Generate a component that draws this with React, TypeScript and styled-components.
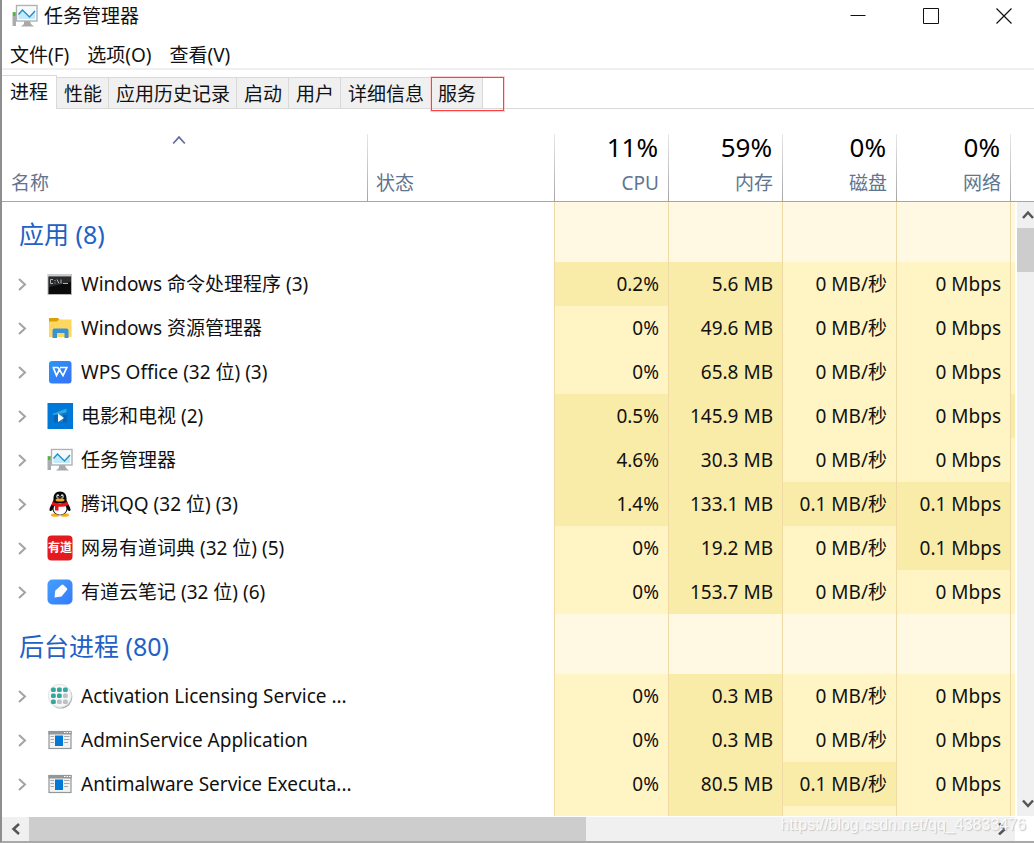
import React from "react";
import styled, { createGlobalStyle } from "styled-components";

const GlobalStyle = createGlobalStyle`
  *, *::before, *::after { box-sizing: border-box; }
  body { margin: 0; background: #fff; }
  button { font: inherit; color: inherit; }
`;

const Window = styled.main`
  position: relative;
  display: flex;
  flex-direction: column;
  height: 100vh;
  overflow: hidden;
  border-left: 2px solid #8e8e8e;
  border-bottom: 2px solid #a9a9a9;
  background: #fff;
  color: #111;
  font: 19px/24px "Noto Sans", "Noto Sans CJK SC", sans-serif;
`;

const TitleBar = styled.header`
  display: flex;
  align-items: center;
  gap: 6px;
  height: 32px;
  flex: none;
  padding-left: 10px;
`;

const Title = styled.h1`
  margin: 0;
  flex: 1;
  font-size: 19px;
  font-weight: 400;
`;

const Captions = styled.div`
  display: flex;
  align-self: stretch;
`;

const CaptionButton = styled.button`
  display: flex;
  align-items: center;
  justify-content: center;
  width: 73px;
  padding: 0;
  border: 0;
  background: none;

  &:last-child {
    width: 60px;
    margin-left: 7px;
  }
`;

const MenuBar = styled.nav`
  display: flex;
  align-items: center;
  gap: 18px;
  height: 38px;
  flex: none;
  padding: 12px 8px 2px;
  border-bottom: 2px solid #f0f0f0;
`;

const MenuButton = styled.button`
  padding: 0;
  border: 0;
  background: none;
  line-height: 22px;
`;

const TabStrip = styled.div`
  display: flex;
  align-items: flex-end;
  height: 39px;
  flex: none;
  padding-top: 5px;
  background: linear-gradient(#d9d9d9, #d9d9d9) bottom / 100% 1px no-repeat;
`;

const TabSlot = styled.div`
  position: relative;
  display: flex;
`;

const Tab = styled.button<{ $active?: boolean }>`
  height: ${(p) => (p.$active ? 34 : 32)}px;
  padding: ${(p) => (p.$active ? "0 8px 2px" : "2px 6px 0 7px")};
  border: solid #d9d9d9;
  border-width: ${(p) => (p.$active ? "1px 1px 0 0" : "1px 1px 1px 0")};
  background: ${(p) => (p.$active ? "#fff" : "#f0f0f0")};
  line-height: 24px;
  white-space: nowrap;
`;

const TabOutline = styled.div`
  position: absolute;
  top: 0;
  left: 0;
  width: 73px;
  height: 34px;
  border: 1px solid #ff4040;
  box-shadow: 0 0 0 1px #ffd0d0;
  pointer-events: none;
`;

const Panel = styled.section`
  display: flex;
  flex: 1;
  min-height: 0;
  padding-top: 21px;
`;

const ListView = styled.div`
  flex: 1;
  min-width: 0;
  overflow: hidden;
`;

const ProcessTable = styled.table`
  width: 100%;
  table-layout: fixed;
  border-spacing: 0;
`;

const Col = styled.col<{ $w?: number }>`
  width: ${(p) => (p.$w ? `${p.$w}px` : "auto")};
`;

const HeadCell = styled.th<{ $align?: string; $line?: boolean }>`
  height: 72px;
  padding: 0 9px;
  border-bottom: 1px solid #a6a6a6;
  background: ${(p) =>
    p.$line ? "linear-gradient(#e8e8e8, #a6a6a6) left bottom / 1px 67px no-repeat" : "none"};
  color: #5f7590;
  font-weight: 400;
  text-align: ${(p) => p.$align || "left"};
  vertical-align: top;

  &:last-child { padding: 0; }
`;

const Total = styled.div`
  height: 36px;
  padding-right: 1px;
  color: #000;
  font-size: 26px;
  line-height: 34px;
`;

const HeadLabel = styled.div`
  margin-top: 5px;
  line-height: 24px;
`;

const SortMark = styled.div`
  display: flex;
  justify-content: center;
  height: 36px;
  padding: 3px 12px 0 0;
`;

const GroupCell = styled.th`
  height: 60px;
  padding: 4px 17px 0;
  color: #2460c4;
  font-size: 25px;
  line-height: 36px;
  font-weight: 400;
  text-align: left;
`;

const NameCell = styled.th`
  height: 44px;
  padding: 0 0 0 14px;
  font-weight: 400;
  text-align: left;
`;

const NameContent = styled.div`
  display: flex;
  align-items: center;
  white-space: nowrap;
`;

const Expander = styled.button`
  display: flex;
  width: 12px;
  margin-right: 19px;
  padding: 0;
  border: 0;
  background: none;
`;

const IconBox = styled.span`
  display: flex;
  width: 26px;
  margin-right: 8px;
`;

const heat = { none: "#fff8e2", low: "#fff4c4", mid: "#f9eca8" };
type Heat = keyof typeof heat;

const DataCell = styled.td<{ $heat: Heat }>`
  padding: 0 9px 0 0;
  border-left: 1px solid #efdaa6;
  background: ${(p) => heat[p.$heat]};
  text-align: right;
  white-space: nowrap;

  &:last-child { padding: 0; }
`;

const VScroll = styled.div`
  display: flex;
  flex-direction: column;
  width: 19px;
  flex: none;
`;

const HeadFiller = styled.div`
  height: 72px;
  flex: none;
  border-bottom: 1px solid #a6a6a6;
`;

const VTrack = styled.div`
  display: flex;
  flex: 1;
  flex-direction: column;
  margin-left: 2px;
  background: #f0f0f0;
`;

const VThumb = styled.div`
  height: 44px;
  background: #cdcdcd;
`;

const ArrowButton = styled.button<{ $end?: boolean }>`
  display: flex;
  align-items: center;
  justify-content: flex-end;
  height: 26px;
  padding: 0;
  border: 0;
  background: none;
  margin-top: ${(p) => (p.$end ? "auto" : "0")};
`;

const HScroll = styled.div`
  display: flex;
  align-items: stretch;
  height: 25px;
  flex: none;
  margin-right: 19px;
  border-top: 1px solid #fff;
  background: #f0f0f0;
`;

const HArrow = styled.button<{ $end?: boolean }>`
  display: flex;
  align-items: center;
  justify-content: center;
  width: 27px;
  padding: 0;
  border: 0;
  background: none;
  margin-left: ${(p) => (p.$end ? "auto" : "0")};
`;

const HThumb = styled.div`
  width: 55%;
  background: #cdcdcd;
`;

const Watermark = styled.div`
  position: absolute;
  right: 8px;
  bottom: 4px;
  color: #fafafa;
  font: 16px/24px "Liberation Sans", Arial, sans-serif;
  text-shadow: 1px 1px 1px #c4c4c4;
  pointer-events: none;
`;

function Chevron({ dir, color = "#555", size = 12, weight = 2 }: {
  dir: "up" | "down" | "left" | "right"; color?: string; size?: number; weight?: number;
}) {
  const paths = {
    up: "M1 9 L6 3.5 L11 9",
    down: "M1 3.5 L6 9 L11 3.5",
    left: "M9 1 L3.5 6 L9 11",
    right: "M3 0.5 L9 6 L3 11.5",
  };
  return (
    <svg width={size} height={size} viewBox="0 0 12 12" fill="none" stroke={color} strokeWidth={weight}>
      <path d={paths[dir]} />
    </svg>
  );
}

function TaskManagerIcon() {
  return (
    <svg width="26" height="24" viewBox="0 0 26 24">
      <rect x="0.5" y="8" width="3.5" height="14" fill="#a9adb0" />
      <rect x="1" y="8.5" width="2.5" height="3.5" fill="#3ec41e" />
      <path d="M12 17h6l1 3 3 2.5H9L12 20z" fill="#a9a9a9" />
      <rect x="4.5" y="1.5" width="20.5" height="15.5" fill="#fff" stroke="#aeb2b5" strokeWidth="1.4" />
      <rect x="6.5" y="3.5" width="16.5" height="11.5" fill="#f2fafe" />
      <path d="M6.5 11l4-5 4 4 3 3 5.500-6v8h-16.500z" fill="#c3eafb" />
      <path d="M6.500 10.500l4-4.500 7 7 5.500-6" fill="none" stroke="#258fc2" strokeWidth="1.4" />
    </svg>
  );
}

function CmdIcon() {
  return (
    <svg width="26" height="26" viewBox="0 0 26 26">
      <rect x="1" y="3.500" width="23.500" height="20" fill="#0b0b0b" stroke="#b5b8ba" />
      <rect x="1" y="3" width="23.500" height="2.500" fill="#c9cdd0" />
      <path d="M2 6h22v5L2 16z" fill="#2b2b2b" />
      <path d="M6 8.500H3.500v4H6M8 9v1M8 11.500v1M10 8.500l2 4M14 8.500v4M16 12.500h5" stroke="#b0b0b0" fill="none" />
    </svg>
  );
}

function FolderIcon() {
  return (
    <svg width="26" height="26" viewBox="0 0 26 26">
      <path d="M2 3h9l2 2.500V10H2z" fill="#dda003" />
      <path d="M2 6.500h8l2-2h12.500V22H2z" fill="#ffd65e" />
      <path d="M5.500 23v-7.500a2 2 0 0 1 2-2h12a2 2 0 0 1 2 2V23h-4v-5h-7.500v5z" fill="#3993d2" />
    </svg>
  );
}

function WpsIcon() {
  return (
    <svg width="26" height="26" viewBox="0 0 26 26">
      <defs>
        <linearGradient id="wps" x1="0" y1="0" x2="1" y2="1">
          <stop offset="0" stopColor="#2996f7" /><stop offset="1" stopColor="#3870f7" />
        </linearGradient>
      </defs>
      <rect x="2" y="2" width="22.500" height="22.500" rx="3" fill="url(#wps)" />
      <path d="M5.500 8.500h5.500l5 8L19.800 8.500H13M6.200 8.500l3.300 8 3.500-7" fill="none" stroke="#fff" strokeWidth="1.700" />
    </svg>
  );
}

function MoviesIcon() {
  return (
    <svg width="26" height="26" viewBox="0 0 26 26">
      <rect x="0.500" width="25.500" height="26" fill="#0078d7" />
      <path d="M7 12h13v7.500H7z" fill="#0864b4" />
      <path d="M5.500 11l14-5.500v4L6.500 12z" fill="#2fa9e3" />
      <path d="M11 11h5v8h-5z" fill="#1c82bf" />
      <path d="M11 10.500l6 4.500-6 4z" fill="#fff" />
    </svg>
  );
}

function QqIcon() {
  return (
    <svg width="26" height="26" viewBox="0 0 26 26">
      <ellipse cx="8.500" cy="24" rx="4.500" ry="1.800" fill="#f6ae19" />
      <ellipse cx="17.500" cy="24" rx="4.500" ry="1.800" fill="#f6ae19" />
      <path d="M13 0.500c-4.500 0-6.500 3-6.500 7 0 3-1 4.500-2.500 7-1.500 2.500-2 5-1 5.500s2-1 2.500-1.500c.5 3 3.500 5.500 7.500 5.500s7-2.500 7.500-5.500c.5.500 1.500 2 2.500 1.500s.5-3-1-5.500c-1.500-2.500-2.500-4-2.500-7 0-4-2-7-6.500-7z" fill="#080808" />
      <ellipse cx="13" cy="18" rx="6.500" ry="5.700" fill="#fff" />
      <ellipse cx="10.800" cy="5.500" rx="1.500" ry="2.200" fill="#ddd" />
      <ellipse cx="15.200" cy="5.500" rx="1.500" ry="2.200" fill="#ddd" />
      <circle cx="11.200" cy="5.800" r="0.900" /><circle cx="14.800" cy="5.800" r="0.900" />
      <ellipse cx="13" cy="9" rx="4.500" ry="1.500" fill="#f6ae19" />
      <path d="M5.500 10.500c4 2.500 11 2.500 15 0l1 3.500c-3 1.500-6.500 2-10 1.800v3.700H8v-4.500l-3.500-1z" fill="#e8131b" />
    </svg>
  );
}

function YoudaoDictIcon() {
  return (
    <svg width="26" height="26" viewBox="0 0 26 26">
      <rect x="0.500" y="0.500" width="25" height="25" rx="4" fill="#e31b1e" />
      <text x="13" y="17" textAnchor="middle" fill="#fff" fontSize="12" fontWeight="700" fontFamily="Noto Sans CJK SC, sans-serif">有道</text>
    </svg>
  );
}

function YoudaoNoteIcon() {
  return (
    <svg width="26" height="26" viewBox="0 0 26 26">
      <defs>
        <linearGradient id="note" x1="0" y1="0" x2="1" y2="1">
          <stop offset="0" stopColor="#44a0fb" /><stop offset="1" stopColor="#3779fb" />
        </linearGradient>
      </defs>
      <rect x="0.500" y="0.500" width="25" height="25" rx="5" fill="url(#note)" />
      <path d="M7.500 18.500l.8-7 6.200-5.500q1-.8 2 0l3.200 3q1 1 .2 2l-5.400 6.500z" fill="#fff" />
    </svg>
  );
}

function LicenseIcon() {
  return (
    <svg width="26" height="26" viewBox="0 0 26 26">
      <circle cx="13.800" cy="14" r="11.500" fill="#aab0b0" />
      <circle cx="12.800" cy="12.800" r="11.500" fill="#f5f8f8" stroke="#dfe5e6" />
      {[0, 1, 2].map((r) => [0, 1, 2].map((c) => (
        <rect key={`${r}${c}`} x={4 + c * 6} y={4.500 + r * 6} width="4.800" height="4.500" rx="1.500"
          fill={r === 2 && c > 0 || r === 1 && c === 2 ? "#bcc1c1" : "#35a79e"} />
      )))}
    </svg>
  );
}

function AppIcon() {
  return (
    <svg width="26" height="26" viewBox="0 0 26 26">
      <rect x="2" y="4.500" width="22" height="17" fill="#f2f2f2" stroke="#929799" strokeWidth="1.200" />
      <path d="M1.500 4h23v3.500h-23z" fill="#929799" />
      <path d="M17 5.500h1.500M19.500 5.500H21M22 5.500h1.500" stroke="#fff" />
      <rect x="8" y="8.500" width="8" height="10.500" fill="#0078d7" />
      <path d="M3.500 9.500h3.500M3.500 12.500h3.500M3.500 15.500h3.500M17 9.500h5.500M17 12.500h5.500M17 15.500h4" stroke="#a5a9ab" />
    </svg>
  );
}

type Row = { name: string; icon: React.FC; values: string[]; heats: Heat[] };
const L: Heat = "low";
const M: Heat = "mid";

const row = (name: string, icon: React.FC, values: string[], heats: Heat[]): Row => ({ name, icon, values, heats });
const D = "0 MB/秒";
const N = "0 Mbps";

const groups: { title: string; rows: Row[] }[] = [
  {
    title: "应用 (8)",
    rows: [
      row("Windows 命令处理程序 (3)", CmdIcon, ["0.2%", "5.6 MB", D, N], [M, M, L, L, L]),
      row("Windows 资源管理器", FolderIcon, ["0%", "49.6 MB", D, N], [L, M, L, L, L]),
      row("WPS Office (32 位) (3)", WpsIcon, ["0%", "65.8 MB", D, N], [L, M, L, L, L]),
      row("电影和电视 (2)", MoviesIcon, ["0.5%", "145.9 MB", D, N], [M, M, L, L, M]),
      row("任务管理器", TaskManagerIcon, ["4.6%", "30.3 MB", D, N], [M, M, L, L, L]),
      row("腾讯QQ (32 位) (3)", QqIcon, ["1.4%", "133.1 MB", "0.1 MB/秒", "0.1 Mbps"], [M, M, M, M, L]),
      row("网易有道词典 (32 位) (5)", YoudaoDictIcon, ["0%", "19.2 MB", D, "0.1 Mbps"], [L, M, L, M, L]),
      row("有道云笔记 (32 位) (6)", YoudaoNoteIcon, ["0%", "153.7 MB", D, N], [L, M, L, L, L]),
    ],
  },
  {
    title: "后台进程 (80)",
    rows: [
      row("Activation Licensing Service ...", LicenseIcon, ["0%", "0.3 MB", D, N], [L, M, L, L, L]),
      row("AdminService Application", AppIcon, ["0%", "0.3 MB", D, N], [L, M, L, L, L]),
      row("Antimalware Service Executa...", AppIcon, ["0%", "80.5 MB", "0.1 MB/秒", N], [L, M, M, L, L]),
    ],
  },
];

const totals = [["11%", "CPU"], ["59%", "内存"], ["0%", "磁盘"], ["0%", "网络"]];
const menus = ["文件(F)", "选项(O)", "查看(V)"];
const tabs = ["进程", "性能", "应用历史记录", "启动", "用户", "详细信息", "服务"];

export default function App() {
  return (
    <Window>
      <GlobalStyle />
      <TitleBar>
        <TaskManagerIcon />
        <Title>任务管理器</Title>
        <Captions>
          <CaptionButton aria-label="最小化">
            <svg width="16" height="16" viewBox="0 0 16 16" stroke="#111"><path d="M0.500 7.500h15" /></svg>
          </CaptionButton>
          <CaptionButton aria-label="最大化">
            <svg width="16" height="16" viewBox="0 0 16 16" stroke="#111" fill="none"><path d="M0.500 0.500h15v15h-15z" /></svg>
          </CaptionButton>
          <CaptionButton aria-label="关闭">
            <svg width="16" height="16" viewBox="0 0 16 16" stroke="#111" strokeWidth="1.200"><path d="M0.500 0.500l15 15M15.500 0.500l-15 15" /></svg>
          </CaptionButton>
        </Captions>
      </TitleBar>
      <MenuBar>
        {menus.map((label) => (
          <MenuButton key={label}>{label}</MenuButton>
        ))}
      </MenuBar>
      <TabStrip role="tablist">
        {tabs.map((t, i) => (
          <TabSlot key={t}>
            <Tab role="tab" aria-selected={i === 0} $active={i === 0}>{t}</Tab>
            {t === "服务" && <TabOutline />}
          </TabSlot>
        ))}
      </TabStrip>
      <Panel>
        <ListView>
          <ProcessTable>
            <colgroup>
              <Col /><Col $w={187} /><Col $w={114} /><Col $w={114} /><Col $w={114} /><Col $w={114} /><Col $w={5} />
            </colgroup>
            <thead>
              <tr>
                <HeadCell scope="col">
                  <SortMark><Chevron dir="up" color="#65709c" size={14} weight={1.5} /></SortMark>
                  <HeadLabel>名称</HeadLabel>
                </HeadCell>
                <HeadCell scope="col" $line><Total /><HeadLabel>状态</HeadLabel></HeadCell>
                {totals.map(([value, label]) => (
                  <HeadCell scope="col" key={label} $line $align="right">
                    <Total>{value}</Total>
                    <HeadLabel>{label}</HeadLabel>
                  </HeadCell>
                ))}
                <HeadCell as="td" $line />
              </tr>
            </thead>
            {groups.map((g, gi) => (
              <tbody key={g.title}>
                <tr>
                  <GroupCell colSpan={2} scope="rowgroup">{g.title}</GroupCell>
                  {[0, 1, 2, 3, 4].map((c) => <DataCell key={c} $heat="none" />)}
                </tr>
                {g.rows.map((r) => (
                  <tr key={r.name}>
                    <NameCell colSpan={2} scope="row">
                      <NameContent>
                        <Expander aria-label="展开"><Chevron dir="right" color="#a3a3a3" size={13} /></Expander>
                        <IconBox><r.icon /></IconBox>
                        {r.name}
                      </NameContent>
                    </NameCell>
                    {r.heats.map((h, i) => <DataCell key={i} $heat={h}>{r.values[i]}</DataCell>)}
                  </tr>
                ))}
                {gi === groups.length - 1 && (
                  <tr>
                    <NameCell as="td" colSpan={2} />
                    {[L, M, L, L, L].map((h, i) => <DataCell key={i} $heat={h} />)}
                  </tr>
                )}
              </tbody>
            ))}
          </ProcessTable>
        </ListView>
        <VScroll>
          <HeadFiller />
          <VTrack>
            <ArrowButton aria-label="向上滚动"><Chevron dir="up" weight={2.5} /></ArrowButton>
            <VThumb />
            <ArrowButton aria-label="向下滚动" $end><Chevron dir="down" weight={2.5} /></ArrowButton>
          </VTrack>
        </VScroll>
      </Panel>
      <HScroll>
        <HArrow aria-label="向左滚动"><Chevron dir="left" weight={2.5} /></HArrow>
        <HThumb />
        <HArrow aria-label="向右滚动" $end><Chevron dir="right" weight={2.5} /></HArrow>
      </HScroll>
      <Watermark>https://blog.csdn.net/qq_43833476</Watermark>
    </Window>
  );
}
